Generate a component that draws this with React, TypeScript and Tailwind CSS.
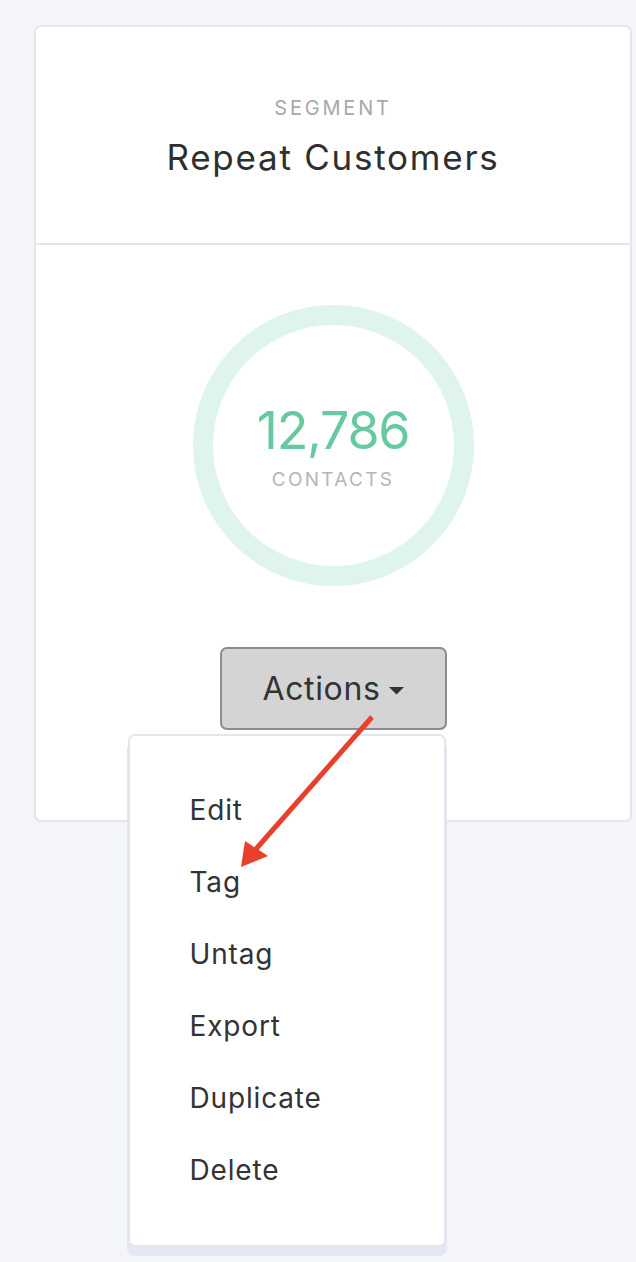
const items = ["Edit", "Tag", "Untag", "Export", "Duplicate", "Delete"];

export default function App() {
  return (
    <div
      className="relative min-h-[1262px] w-full bg-[#f4f5f9] pt-[25px] pl-[34px] pr-[4px]"
      style={{ fontFamily: 'Inter, "Liberation Sans", sans-serif' }}
    >
      {/* Segment card */}
      <div className="h-[797px] w-[598px] rounded-[7px] border-2 border-[#e6e6e9] bg-white">
        <div className="flex h-[218px] flex-col items-center border-b-2 border-[#e6e6e9] pt-[66px]">
          <div className="text-[20px] tracking-[0.14em] text-[#a9a9a9]">SEGMENT</div>
          <div className="mt-[8px] text-[35px] tracking-[0.05em] text-[#2f2f2f]">Repeat Customers</div>
        </div>

        <div className="flex flex-col items-center pt-[60px]">
          {/* Contacts ring */}
          <div className="flex h-[281px] w-[281px] flex-col items-center justify-center rounded-full border-[20px] border-[#def4ec]">
            <div className="mt-[8px] text-[52px] leading-none tracking-[-0.025em] text-[#66c9a0]">12,786</div>
            <div className="mt-[9px] text-[19px] tracking-[0.12em] text-[#b6b6b6]">CONTACTS</div>
          </div>

          {/* Actions dropdown */}
          <div className="relative mt-[61px]">
            <button className="flex h-[83px] w-[227px] items-center justify-center gap-[8px] rounded-[7px] border-2 border-[#8c8c8c] bg-[#d4d4d4] text-[32px] tracking-[0.02em] text-[#333]">
              <span>Actions</span>
              <svg width="15" height="8" viewBox="0 0 15 8" className="mt-[4px]">
                <path d="M0 0h15L7.5 7.5z" fill="#333" />
              </svg>
            </button>

            <div className="absolute left-[-92px] top-[87px] z-10 w-[318px] rounded-[7px] border-2 border-[#e3e6ef] bg-white pt-[38px] pb-[39px] shadow-[0_8px_0_1px_#e5e8f0]">
              {items.map((item) => (
                <div key={item} className="h-[72px] pl-[60px] text-[28px] leading-[72px] tracking-[0.03em] text-[#333]">
                  {item}
                </div>
              ))}
            </div>
          </div>
        </div>
      </div>

      {/* Annotation arrow */}
      <svg className="pointer-events-none absolute left-0 top-0 z-20" width="636" height="1262">
        <line x1="372" y1="717" x2="256" y2="849" stroke="#e8412b" strokeWidth="5" />
        <polygon points="241,867 245,841 268,856" fill="#e8412b" />
      </svg>
    </div>
  );
}
